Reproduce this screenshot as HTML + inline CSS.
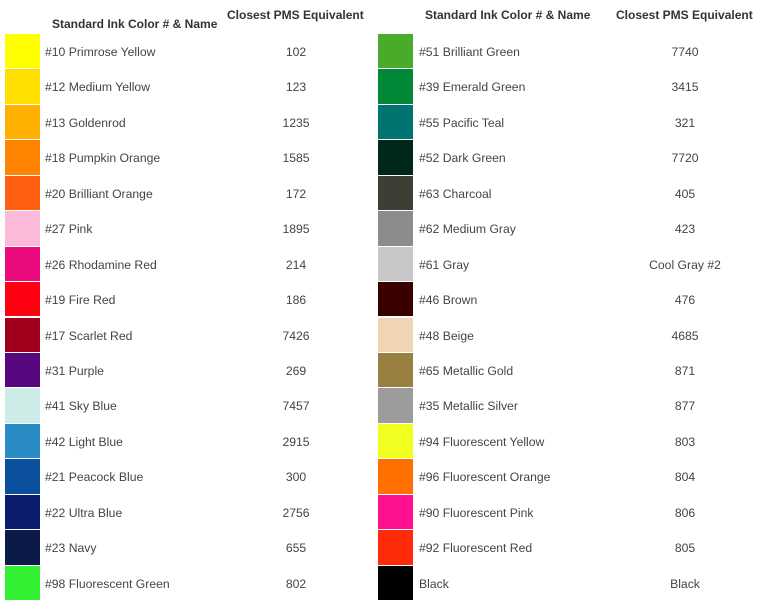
<!DOCTYPE html><html><head><style>
body{margin:0;width:768px;height:609px;background:#fff;font-family:"Liberation Sans",Arial,sans-serif;position:relative;overflow:hidden}
.h{position:absolute;font-weight:bold;font-size:12px;color:#333;white-space:nowrap}
.s{position:absolute;width:35px;height:34.4px}
.t{position:absolute;font-size:12.2px;color:#444;white-space:nowrap;line-height:14px}
.n{position:absolute;font-size:12.2px;color:#444;white-space:nowrap;line-height:14px;width:160px;text-align:center}
</style></head><body>
<div class="h" style="left:52px;top:17px">Standard Ink Color # &amp; Name</div>
<div class="h" style="left:227px;top:8px">Closest PMS Equivalent</div>
<div class="h" style="left:425px;top:8px">Standard Ink Color # &amp; Name</div>
<div class="h" style="left:616px;top:8px">Closest PMS Equivalent</div>
<div id="c"></div>
<script>
var L=[["#ffff00","#10 Primrose Yellow","102"],["#ffdf00","#12 Medium Yellow","123"],["#ffb000","#13 Goldenrod","1235"],["#ff8400","#18 Pumpkin Orange","1585"],["#ff5e10","#20 Brilliant Orange","172"],["#fbbad8","#27 Pink","1895"],["#ea0a7e","#26 Rhodamine Red","214"],["#ff0010","#19 Fire Red","186"],["#a0001e","#17 Scarlet Red","7426"],["#58087e","#31 Purple","269"],["#cdece8","#41 Sky Blue","7457"],["#2a8cc4","#42 Light Blue","2915"],["#0a509c","#21 Peacock Blue","300"],["#0c1c6c","#22 Ultra Blue","2756"],["#0c1a48","#23 Navy","655"],["#33f033","#98 Fluorescent Green","802"]];
var R=[["#4aaa2a","#51 Brilliant Green","7740"],["#008836","#39 Emerald Green","3415"],["#007470","#55 Pacific Teal","321"],["#002818","#52 Dark Green","7720"],["#3e3e34","#63 Charcoal","405"],["#8c8c8c","#62 Medium Gray","423"],["#c8c8c8","#61 Gray","Cool Gray #2"],["#3a0000","#46 Brown","476"],["#f0d4b4","#48 Beige","4685"],["#9a8040","#65 Metallic Gold","871"],["#9c9c9c","#35 Metallic Silver","877"],["#f0ff20","#94 Fluorescent Yellow","803"],["#ff7000","#96 Fluorescent Orange","804"],["#ff1090","#90 Fluorescent Pink","806"],["#ff2a08","#92 Fluorescent Red","805"],["#000000","Black","Black"]];
var h="";
function add(a,sx,tx,nx){a.forEach(function(r,i){var y=34+i*35.44;
h+='<div class="s" style="left:'+sx+'px;top:'+y+'px;background:'+r[0]+'"></div>';
h+='<div class="t" style="left:'+tx+'px;top:'+(y+11)+'px">'+r[1]+'</div>';
h+='<div class="n" style="left:'+(nx-80)+'px;top:'+(y+11)+'px">'+r[2]+'</div>';});}
add(L,5,45,296);add(R,378,419,685);
document.getElementById("c").innerHTML=h;
</script>
</body></html>
